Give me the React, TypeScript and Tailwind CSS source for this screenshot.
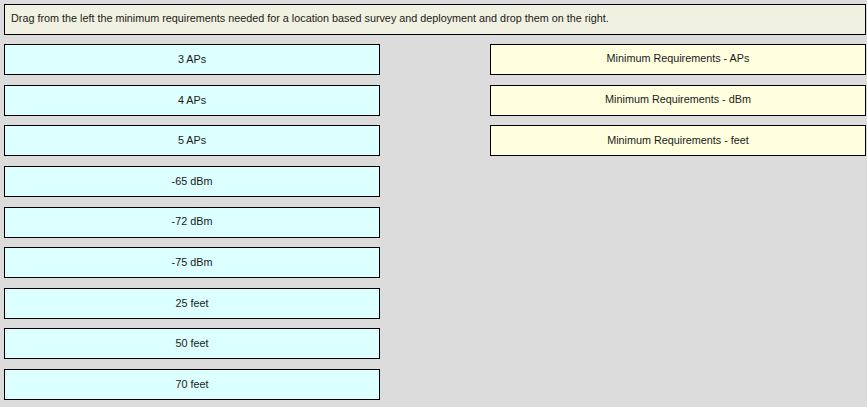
import React from "react";

const left = ["3 APs", "4 APs", "5 APs", "-65 dBm", "-72 dBm", "-75 dBm", "25 feet", "50 feet", "70 feet"];
const right = ["Minimum Requirements - APs", "Minimum Requirements - dBm", "Minimum Requirements - feet"];

export default function App() {
  return (
    <div
      className="w-[867px] h-[407px] bg-[#dcdcdc] pt-[4px] pl-[4px] text-[10.8px] text-[#1a1a1a] overflow-hidden"
      style={{ fontFamily: '"Liberation Sans", Arial, sans-serif' }}
    >
      <div className="w-[862px] h-[31px] border border-black bg-[#f1f1e1] flex items-center pl-[6px] pb-[2px]">
        Drag from the left the minimum requirements needed for a location based survey and deployment and drop them on the right.
      </div>
      <div className="flex gap-[110px] mt-[9px]">
        <div className="flex flex-col gap-[9.625px]">
          {left.map((t) => (
            <div key={t} className="w-[376px] h-[31px] border border-black bg-[#dcffff] flex items-center justify-center pb-[1px]">
              {t}
            </div>
          ))}
        </div>
        <div className="flex flex-col gap-[9.625px]">
          {right.map((t) => (
            <div key={t} className="w-[376px] h-[31px] border border-black bg-[#ffffe0] flex items-center justify-center pb-[2px]">
              {t}
            </div>
          ))}
        </div>
      </div>
    </div>
  );
}
